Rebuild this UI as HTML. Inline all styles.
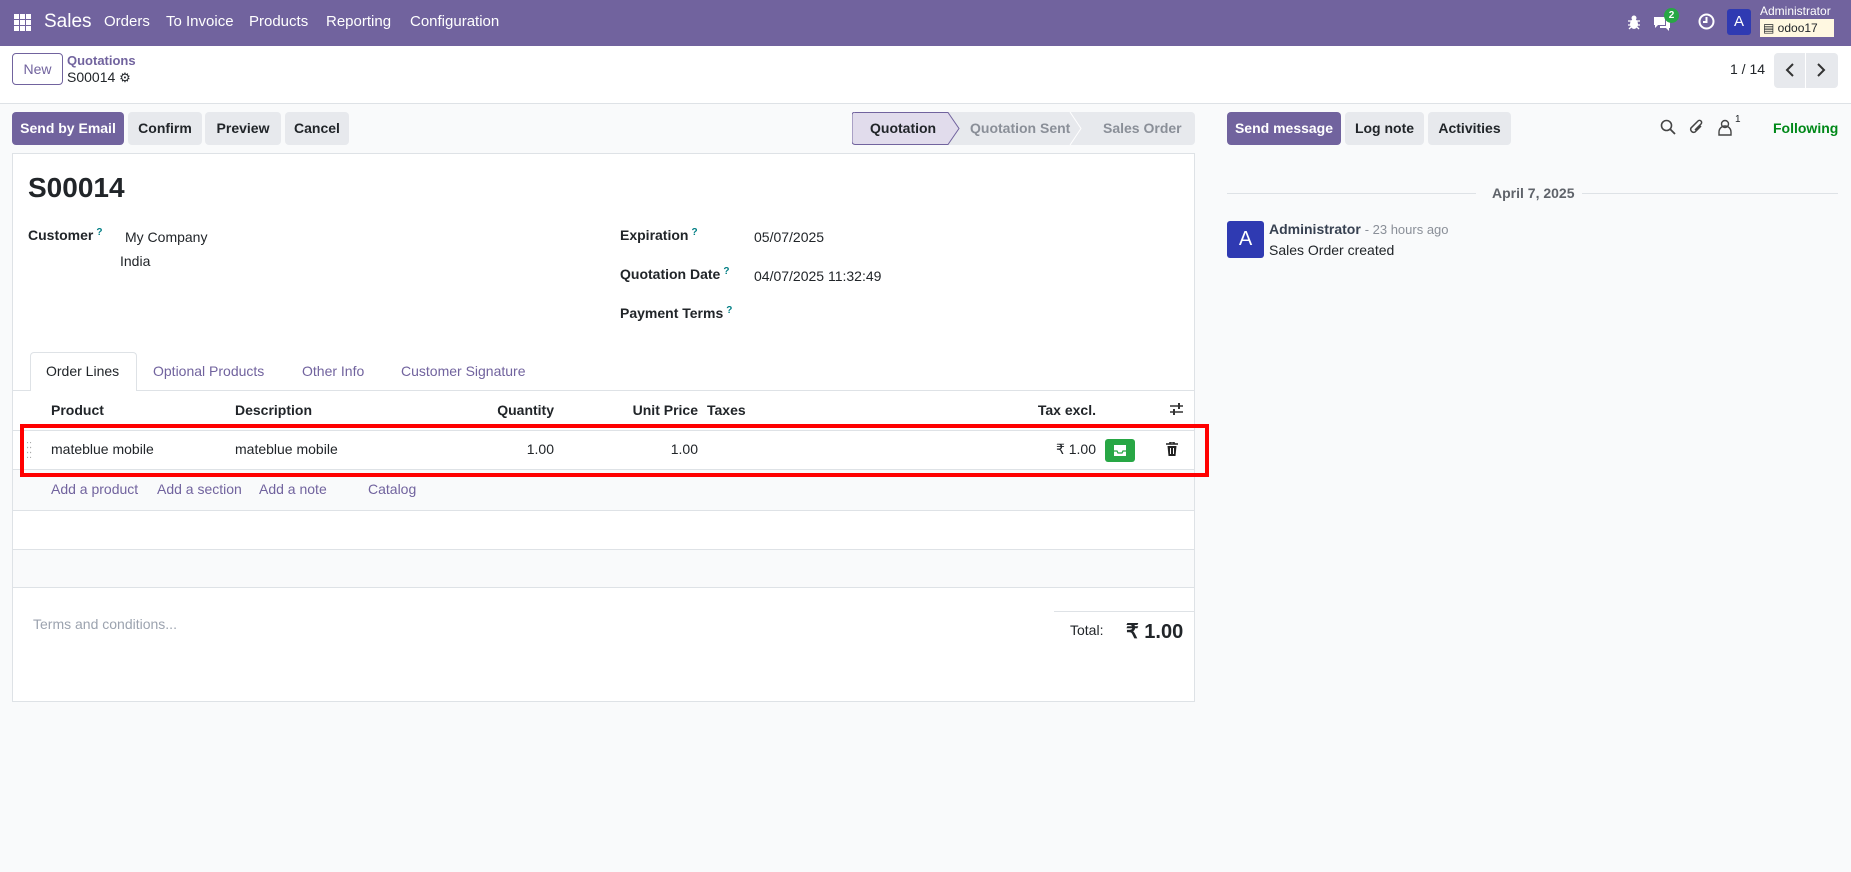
<!DOCTYPE html>
<html><head><meta charset="utf-8"><style>
*{box-sizing:border-box;margin:0;padding:0}
body{width:1851px;height:872px;overflow:hidden;background:#f9fafb;font-family:"Liberation Sans",sans-serif;font-size:14px;color:#212529;position:relative}
.a{position:absolute;white-space:nowrap}
.nav{position:absolute;left:0;top:0;width:1851px;height:46px;background:#71639e;color:#fff}
.btn{position:absolute;top:112px;height:33px;line-height:33px;border-radius:4px;background:#e7e9ed;font-weight:bold;font-size:14px;text-align:center;color:#212529}
.pr{background:#71639e;color:#fff}
.lnk{color:#71639e}
.b{font-weight:bold}
.hl{position:absolute;height:1px;background:#dee2e6}
.q{color:#017e84;font-size:10px;vertical-align:top;margin-left:3px}
</style></head><body>
<div class="nav">
 <svg class="a" style="left:14px;top:14px" width="17" height="17" viewBox="0 0 17 17" fill="#fff"><rect x="0" y="0" width="5" height="5"/><rect x="6" y="0" width="5" height="5"/><rect x="12" y="0" width="5" height="5"/><rect x="0" y="6" width="5" height="5"/><rect x="6" y="6" width="5" height="5"/><rect x="12" y="6" width="5" height="5"/><rect x="0" y="12" width="5" height="5"/><rect x="6" y="12" width="5" height="5"/><rect x="12" y="12" width="5" height="5"/></svg>
 <div class="a" style="left:44px;top:11px;font-size:19px">Sales</div>
 <div class="a" style="left:104px;top:13px;font-size:15px">Orders</div>
 <div class="a" style="left:166px;top:13px;font-size:15px">To Invoice</div>
 <div class="a" style="left:249px;top:13px;font-size:15px">Products</div>
 <div class="a" style="left:326px;top:13px;font-size:15px">Reporting</div>
 <div class="a" style="left:410px;top:13px;font-size:15px">Configuration</div>
 <svg class="a" style="left:1627px;top:14px" width="14" height="16" viewBox="0 0 14 16" fill="#fff"><ellipse cx="7" cy="10" rx="4" ry="5"/><circle cx="7" cy="4" r="2.5"/><path d="M1 7h12M1 11h12M2 15l2-2M12 15l-2-2" stroke="#fff" stroke-width="1.3"/></svg>
 <svg class="a" style="left:1653px;top:15px" width="18" height="16" viewBox="0 0 18 16" fill="#fff"><path d="M1 2h11v8H5l-3 3V10H1z"/><path d="M13 5h4v8h-1v3l-3-3H7v-2h6z"/></svg>
 <div class="a" style="left:1664px;top:8px;width:15px;height:15px;border-radius:50%;background:#28a745;font-size:10px;text-align:center;line-height:15px;font-weight:bold">2</div>
 <svg class="a" style="left:1698px;top:13px" width="17" height="17" viewBox="0 0 17 17"><circle cx="8.5" cy="8.5" r="7" fill="none" stroke="#fff" stroke-width="2"/><path d="M8.5 4v5H5" stroke="#fff" stroke-width="2" fill="none"/></svg>
 <div class="a" style="left:1727px;top:9px;width:24px;height:26px;background:#2f3ab2;border-radius:3px;text-align:center;line-height:26px;font-size:15px">A</div>
 <div class="a" style="left:1760px;top:4px;font-size:12px">Administrator</div>
 <div class="a" style="left:1760px;top:19px;width:74px;height:18px;background:#fff8e1;color:#212529;font-size:12px;line-height:18px;padding-left:3px">&#9636; odoo17</div>
</div>
<div class="a" style="left:0;top:46px;width:1851px;height:58px;background:#fff;border-bottom:1px solid #dee2e6"></div>
<div class="a" style="left:12px;top:53px;width:51px;height:32px;border:1px solid #71639e;border-radius:4px;text-align:center;line-height:30px;color:#71639e;font-size:14px">New</div>
<div class="a lnk" style="left:67px;top:53px;font-size:13px;font-weight:bold">Quotations</div>
<div class="a" style="left:67px;top:69px;font-size:14px">S00014 <span style="font-size:13px">&#9881;</span></div>
<div class="a" style="left:1730px;top:61px;font-size:14px">1 / 14</div>
<div class="a" style="left:1774px;top:53px;width:64px;height:35px;background:#e7e9ed;border-radius:4px"></div>
<div class="a" style="left:1805px;top:53px;width:1px;height:35px;background:#fff"></div>
<svg class="a" style="left:1784px;top:62px" width="12" height="16"><path d="M9 2L3 8l6 6" stroke="#333" stroke-width="2" fill="none"/></svg>
<svg class="a" style="left:1815px;top:62px" width="12" height="16"><path d="M3 2l6 6-6 6" stroke="#333" stroke-width="2" fill="none"/></svg>

<div class="btn pr" style="left:12px;width:112px">Send by Email</div>
<div class="btn" style="left:128px;width:74px">Confirm</div>
<div class="btn" style="left:205px;width:76px">Preview</div>
<div class="btn" style="left:285px;width:64px">Cancel</div>
<svg class="a" style="left:852px;top:112px" width="343" height="33"><path d="M4 .5H1102 .5 96 .5 M0 0" fill="none"/>
 <rect x="0" y="0" width="343" height="33" rx="4" fill="#e7e9ed"/>
 <path d="M3 .5H96l11 16-11 16H3a3 3 0 0 1-3-3V3a3 3 0 0 1 3-3z" fill="#e1dcec" stroke="#71639e"/>
 <path d="M218 0l11 16.5-11 16.5" stroke="#fff" fill="none"/>
</svg>
<div class="a b" style="left:870px;top:120px">Quotation</div>
<div class="a b" style="left:970px;top:120px;color:#8a8f98">Quotation Sent</div>
<div class="a b" style="left:1103px;top:120px;color:#8a8f98">Sales Order</div>

<div class="btn pr" style="left:1227px;width:114px">Send message</div>
<div class="btn" style="left:1345px;width:79px">Log note</div>
<div class="btn" style="left:1428px;width:83px">Activities</div>
<svg class="a" style="left:1660px;top:119px" width="16" height="16"><circle cx="6.5" cy="6.5" r="5" stroke="#444" stroke-width="1.6" fill="none"/><path d="M10 10l5 5" stroke="#444" stroke-width="1.8"/></svg>
<svg class="a" style="left:1689px;top:118px" width="16" height="18"><path d="M12 8L6 14a3 3 0 0 1-4-4l7-7a2 2 0 0 1 3 3L6 12" stroke="#444" stroke-width="1.5" fill="none"/></svg>
<svg class="a" style="left:1718px;top:119px" width="14" height="17"><circle cx="7" cy="5" r="3.5" stroke="#444" stroke-width="1.4" fill="none"/><path d="M1 16v-3a6 6 0 0 1 12 0v3z" stroke="#444" stroke-width="1.4" fill="none"/></svg>
<div class="a" style="left:1735px;top:114px;font-size:10px">1</div>
<div class="a b" style="left:1773px;top:120px;color:#008818">Following</div>

<div class="hl" style="left:1227px;top:193px;width:249px"></div>
<div class="hl" style="left:1582px;top:193px;width:256px"></div>
<div class="a b" style="left:1492px;top:185px;color:#5f636a;font-size:14px">April 7, 2025</div>
<div class="a" style="left:1227px;top:221px;width:37px;height:37px;background:#2f3ab2;border-radius:3px;color:#fff;font-size:20px;text-align:center;line-height:37px">A</div>
<div class="a" style="left:1269px;top:221px"><b style="color:#374151">Administrator</b> <span style="color:#8a8f98;font-size:13px">- 23 hours ago</span></div>
<div class="a" style="left:1269px;top:242px">Sales Order created</div>

<div class="a" style="left:12px;top:153px;width:1183px;height:549px;background:#fff;border:1px solid #dee2e6"></div>
<div class="a b" style="left:28px;top:172px;font-size:28px">S00014</div>
<div class="a b" style="left:28px;top:227px">Customer<span class="q">?</span></div>
<div class="a" style="left:125px;top:229px">My Company</div>
<div class="a" style="left:120px;top:253px">India</div>
<div class="a b" style="left:620px;top:227px">Expiration<span class="q">?</span></div>
<div class="a" style="left:754px;top:229px">05/07/2025</div>
<div class="a b" style="left:620px;top:266px">Quotation Date<span class="q">?</span></div>
<div class="a" style="left:754px;top:268px">04/07/2025 11:32:49</div>
<div class="a b" style="left:620px;top:305px">Payment Terms<span class="q">?</span></div>

<div class="hl" style="left:12px;top:390px;width:1183px"></div>
<div class="a" style="left:30px;top:352px;width:107px;height:39px;background:#fff;border:1px solid #dee2e6;border-bottom:none;border-radius:4px 4px 0 0"></div>
<div class="a" style="left:46px;top:363px">Order Lines</div>
<div class="a lnk" style="left:153px;top:363px">Optional Products</div>
<div class="a lnk" style="left:302px;top:363px">Other Info</div>
<div class="a lnk" style="left:401px;top:363px">Customer Signature</div>

<div class="a b" style="left:51px;top:402px">Product</div>
<div class="a b" style="left:235px;top:402px">Description</div>
<div class="a b" style="left:490px;top:402px;width:64px;text-align:right">Quantity</div>
<div class="a b" style="left:620px;top:402px;width:78px;text-align:right">Unit Price</div>
<div class="a b" style="left:707px;top:402px">Taxes</div>
<div class="a b" style="left:1000px;top:402px;width:96px;text-align:right">Tax excl.</div>
<svg class="a" style="left:1169px;top:402px" width="15" height="15"><path d="M1 4h13M1 10h13" stroke="#333" stroke-width="1.6"/><rect x="9" y="1" width="2" height="6" fill="#333"/><rect x="4" y="7" width="2" height="6" fill="#333"/></svg>
<div class="hl" style="left:12px;top:430px;width:1183px"></div>
<div class="a" style="left:26px;top:443px;color:#aaa;font-size:11px;line-height:5px">:: <br>::<br>::</div>
<div class="a" style="left:51px;top:441px">mateblue mobile</div>
<div class="a" style="left:235px;top:441px">mateblue mobile</div>
<div class="a" style="left:490px;top:441px;width:64px;text-align:right">1.00</div>
<div class="a" style="left:620px;top:441px;width:78px;text-align:right">1.00</div>
<div class="a" style="left:1000px;top:441px;width:96px;text-align:right">₹ 1.00</div>
<div class="a" style="left:1105px;top:439px;width:30px;height:23px;background:#28a745;border-radius:3px"></div>
<svg class="a" style="left:1112px;top:444px" width="16" height="13"><path d="M2 1h12v11H2z" fill="#fff"/><path d="M2 7h3l1 2h4l1-2h3" stroke="#28a745" stroke-width="1.3" fill="none"/></svg>
<svg class="a" style="left:1166px;top:442px" width="12" height="14"><path d="M0 2h12M4 2V0h4v2" stroke="#222" stroke-width="1.5" fill="none"/><path d="M1.5 4h9l-1 10h-7z" fill="#222"/><path d="M4.5 6v6M7.5 6v6" stroke="#fff"/></svg>
<div class="hl" style="left:12px;top:469px;width:1183px"></div>
<div class="a" style="left:13px;top:470px;width:1181px;height:40px;background:#f9fafb"></div>
<div class="a lnk" style="left:51px;top:481px">Add a product</div>
<div class="a lnk" style="left:157px;top:481px">Add a section</div>
<div class="a lnk" style="left:259px;top:481px">Add a note</div>
<div class="a lnk" style="left:368px;top:481px">Catalog</div>
<div class="hl" style="left:12px;top:510px;width:1183px"></div>
<div class="a" style="left:13px;top:549px;width:1181px;height:38px;background:#f9fafb"></div>
<div class="hl" style="left:12px;top:549px;width:1183px"></div>
<div class="hl" style="left:12px;top:587px;width:1183px"></div>
<div class="a" style="left:33px;top:616px;color:#9ca3af">Terms and conditions...</div>
<div class="hl" style="left:1054px;top:611px;width:141px"></div>
<div class="a" style="left:1070px;top:622px">Total:</div>
<div class="a b" style="left:1126px;top:619px;font-size:20px">₹ 1.00</div>

<div class="a" style="left:20px;top:424px;width:1189px;height:53px;border:4px solid #ff0000"></div>
</body></html>
